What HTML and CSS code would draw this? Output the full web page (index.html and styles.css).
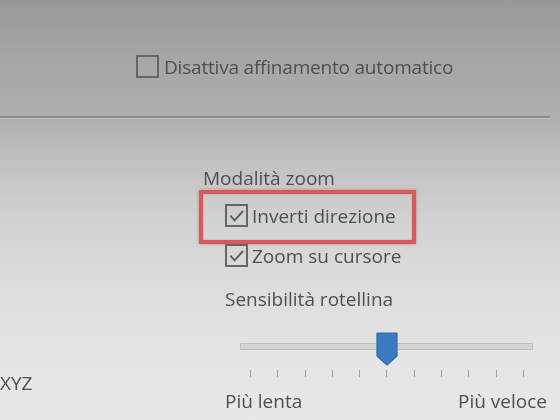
FILE: index.html
```html
<!DOCTYPE html>
<html lang="it">
<head>
<meta charset="utf-8">
<link rel="stylesheet" href="styles.css">
</head>
<body>
<div class="screen">
  <div class="refine-row">
    <span class="box"></span>
    <span class="label">Disattiva affinamento automatico</span>
  </div>
  <div class="separator"></div>
  <div class="lower">
    <div class="left-col">
      <span class="xyz">XYZ</span>
    </div>
    <div class="zoom-col">
      <div class="heading">Modalità zoom</div>
      <div class="highlight">
        <div class="check-row">
          <span class="box"><svg viewBox="0 0 20 20" width="20" height="20"><polyline points="3.5,9.5 8,14.5 17,4.5" fill="none" stroke="#5c5c5c" stroke-width="2"/></svg></span>
          <span class="label">Inverti direzione</span>
        </div>
      </div>
      <div class="check-row plain">
        <span class="box"><svg viewBox="0 0 20 20" width="20" height="20"><polyline points="3.5,9.5 8,14.5 17,4.5" fill="none" stroke="#5c5c5c" stroke-width="2"/></svg></span>
        <span class="label">Zoom su cursore</span>
      </div>
      <div class="heading sens">Sensibilità rotellina</div>
      <div class="slider">
        <div class="track"></div>
        <svg class="thumb" viewBox="0 0 22 34" width="22" height="34"><polygon points="1,1 21,1 21,24 11,33 1,24" fill="#3a7cc3" stroke="#2e69a8" stroke-width="1.2" stroke-linejoin="round"/></svg>
        <div class="ticks">
          <span></span><span></span><span></span><span></span><span></span><span></span><span></span><span></span><span></span><span></span><span></span>
        </div>
      </div>
      <div class="ends">
        <span>Più lenta</span>
        <span>Più veloce</span>
      </div>
    </div>
  </div>
</div>
</body>
</html>
```
FILE: styles.css
```css
html, body {
  margin: 0;
  padding: 0;
}
body {
  width: 560px;
  height: 420px;
  overflow: hidden;
  font-family: "Open Sans", "Noto Sans", sans-serif;
  font-size: 19px;
  color: #4f4f4f;
}
.screen {
  width: 560px;
  height: 420px;
  background: linear-gradient(180deg, #989898 0px, #a6a6a6 60px, #afafaf 118px, #c2c2c2 165px, #d2d2d2 220px, #dddddd 290px, #e4e4e4 350px, #e8e8e8 420px);
  filter: blur(0.45px);
  overflow: hidden;
}
.refine-row {
  display: flex;
  align-items: center;
  gap: 5px;
  padding: 55px 0 0 136px;
  height: 23px;
  line-height: 22px;
}
.refine-row .label {
  letter-spacing: -0.2px;
}
.box {
  width: 19px;
  height: 19px;
  border: 2px solid #666666;
  display: flex;
  align-items: center;
  justify-content: center;
  flex: none;
}
.box svg {
  display: block;
}
.separator {
  margin-top: 38px;
  width: 550px;
  height: 2px;
  background: #8c8c8c;
  box-shadow: 0 1px 0 rgba(255,255,255,0.25);
}
.lower {
  display: grid;
  grid-template-columns: 203px 1fr;
  height: 302px;
}
.left-col {
  display: flex;
  flex-direction: column;
  justify-content: flex-start;
  padding-top: 254px;
}
.xyz {
  line-height: 22px;
}
.zoom-col {
  display: flex;
  flex-direction: column;
  align-items: flex-start;
  line-height: 22px;
}
.heading {
  margin-top: 49px;
}
.highlight {
  margin: 1px 0 0 -4px;
  width: 187px;
  border: 4px solid #d55a5c;
  box-shadow: 0 0 3px rgba(190, 70, 70, 0.55), inset 0 0 2px rgba(190, 70, 70, 0.35);
  padding: 10px 0 13px 22px;
  position: relative;
  z-index: 1;
}
.check-row {
  display: flex;
  align-items: center;
  gap: 4px;
}
.check-row.plain {
  margin: 0 0 0 22px;
}
.heading.sens {
  margin: 21px 0 0 22px;
}
.slider {
  position: relative;
  margin: 22px 0 0 37px;
  width: 293px;
  height: 46px;
}
.track {
  margin-top: 11px;
  height: 5px;
  background: #d4d4d4;
  border: 1px solid #bdbdbd;
  border-radius: 1px;
}
.thumb {
  position: absolute;
  left: 136px;
  top: 0;
}
.ticks {
  display: flex;
  justify-content: space-between;
  padding: 0 9px 0 10px;
  margin-top: 20px;
}
.ticks span {
  width: 1px;
  height: 7px;
  background: #a0a0a0;
}
.ends {
  display: flex;
  justify-content: space-between;
  width: 322px;
  margin: 12px 0 0 22px;
}
```
